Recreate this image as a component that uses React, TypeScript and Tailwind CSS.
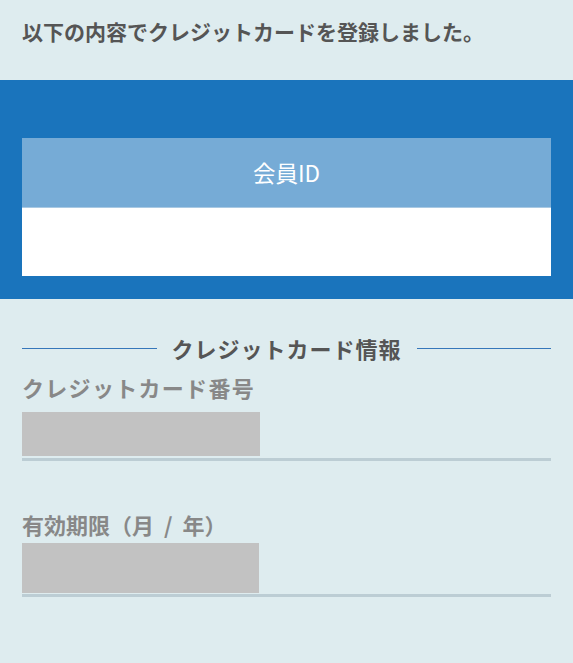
import React from "react";

export default function App() {
  const font = { fontFamily: '"Noto Sans CJK JP", "Noto Sans", sans-serif' };
  return (
    <div className="w-[573px] h-[663px] bg-[#deecef] overflow-hidden" style={font}>
      <div className="h-[80px] pl-[22px] pt-[20px]">
        <p className="text-[21px] leading-[22px] font-bold text-[#555555]">
          以下の内容でクレジットカードを登録しました。
        </p>
      </div>
      <div className="h-[219px] bg-[#1a74bc] pt-[58px] px-[22px]">
        <div className="h-[69px] bg-[#76abd6] flex items-center justify-center text-white text-[22.5px] leading-none">
          会員ID
        </div>
        <div className="h-[69px] bg-white border-t border-[#a9c9e3]"></div>
      </div>
      <div className="px-[22px] pt-[38px]">
        <div className="flex items-center gap-[15px]">
          <div className="flex-1 h-px bg-[#3677ba]"></div>
          <span className="text-[22px] leading-[22px] font-bold text-[#555555] tracking-[1px]">クレジットカード情報</span>
          <div className="flex-1 h-px bg-[#3677ba]"></div>
        </div>
        <p className="mt-[17px] text-[22px] leading-[22px] font-bold text-[#888888] tracking-[1.3px]">クレジットカード番号</p>
        <div className="mt-[14px] w-[238px] h-[44px] bg-[#c2c2c2]"></div>
        <div className="mt-[2px] h-[3px] bg-[#bccdd4]"></div>
        <p className="mt-[52px] text-[22px] leading-[22px] font-bold text-[#888888]">
          有効期限（月&nbsp;&nbsp;/&nbsp;&nbsp;年）
        </p>
        <div className="mt-[8px] w-[237px] h-[50px] bg-[#c2c2c2]"></div>
        <div className="mt-[1px] h-[3px] bg-[#bccdd4]"></div>
      </div>
    </div>
  );
}
